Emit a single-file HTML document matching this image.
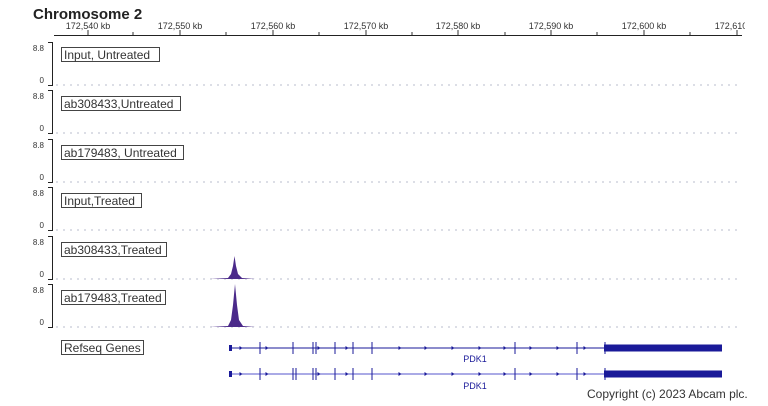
<!DOCTYPE html>
<html><head><meta charset="utf-8"><style>
body{margin:0;background:#fff;width:768px;height:401px;overflow:hidden;font-family:"Liberation Sans",sans-serif}
</style></head><body>
<svg width="768" height="401" xmlns="http://www.w3.org/2000/svg" font-family="Liberation Sans, sans-serif">
<defs>
<clipPath id="ax"><rect x="0" y="0" width="745" height="40"/></clipPath>
<g id="trk">
<path d="M48 0.5H52.5V43.5H48" fill="none" stroke="#222"/>
<text x="44" y="9" font-size="8" fill="#333" text-anchor="end">8.8</text>
<text x="44" y="41" font-size="8" fill="#333" text-anchor="end">0</text>
<line x1="56" y1="43" x2="742" y2="43" stroke="#b8bccc" stroke-width="1" stroke-dasharray="2 5"/>
</g>
<path id="arr" d="M-1.5 -2L1.5 0L-1.5 2Z"/>
</defs>
<text x="33" y="19" font-size="15" font-weight="bold" fill="#222">Chromosome 2</text>
<line x1="54" y1="35.5" x2="742" y2="35.5" stroke="#222" stroke-width="1"/>
<g font-size="9" fill="#333" text-anchor="middle" clip-path="url(#ax)">
<text x="88" y="29">172,540 kb</text><text x="180" y="29">172,550 kb</text><text x="273" y="29">172,560 kb</text><text x="366" y="29">172,570 kb</text><text x="458" y="29">172,580 kb</text><text x="551" y="29">172,590 kb</text><text x="644" y="29">172,600 kb</text><text x="737" y="29">172,610 kb</text>
</g>
<g stroke="#333">
<line x1="88" y1="30" x2="88" y2="35"/><line x1="133" y1="32" x2="133" y2="35"/><line x1="180" y1="30" x2="180" y2="35"/><line x1="226" y1="32" x2="226" y2="35"/><line x1="273" y1="30" x2="273" y2="35"/><line x1="319" y1="32" x2="319" y2="35"/><line x1="366" y1="30" x2="366" y2="35"/><line x1="412" y1="32" x2="412" y2="35"/><line x1="458" y1="30" x2="458" y2="35"/><line x1="505" y1="32" x2="505" y2="35"/><line x1="551" y1="30" x2="551" y2="35"/><line x1="597" y1="32" x2="597" y2="35"/><line x1="644" y1="30" x2="644" y2="35"/><line x1="690" y1="32" x2="690" y2="35"/><line x1="737" y1="30" x2="737" y2="35"/>
</g>
<g font-size="12" fill="#333">
<use href="#trk" y="42"/><rect x="61.5" y="47.5" width="98" height="14" fill="none" stroke="#444"/><text x="64" y="59">Input, Untreated</text>
<use href="#trk" y="90"/><rect x="61.5" y="96.5" width="119" height="14" fill="none" stroke="#444"/><text x="64" y="108">ab308433,Untreated</text>
<use href="#trk" y="139"/><rect x="61.5" y="145.5" width="122" height="14" fill="none" stroke="#444"/><text x="64" y="157">ab179483, Untreated</text>
<use href="#trk" y="187"/><rect x="61.5" y="193.5" width="80" height="14" fill="none" stroke="#444"/><text x="64" y="205">Input,Treated</text>
<use href="#trk" y="236"/><rect x="61.5" y="242.5" width="105" height="14" fill="none" stroke="#444"/><text x="64" y="254">ab308433,Treated</text>
<use href="#trk" y="284"/><rect x="61.5" y="290.5" width="104" height="14" fill="none" stroke="#444"/><text x="64" y="302">ab179483,Treated</text>
<rect x="61.5" y="340.5" width="82" height="14" fill="none" stroke="#444"/><text x="64" y="352">Refseq Genes</text>
</g>
<path d="M210 279L228 278L231 274L233 266L234.5 256L236 266L238 274L242 278L255 279Z" fill="#4b2a8a"/>
<path d="M210 327L228 326L231 320L233 305L235 284L237 305L239 320L243 326L255 327Z" fill="#4b2a8a"/>
<g fill="#1a1a99" stroke="#1a1a99">
<line x1="229" y1="348" x2="605" y2="348"/>
<rect x="229" y="345" width="3" height="6" stroke="none"/>
<rect x="604" y="344.5" width="118" height="7" stroke="none"/>
<path d="M260 342V354M293 342V354M313 342V354M316 342V354M335 342V354M353 342V354M372 342V354M515 342V354M577 342V354M605 342V354"/>
<line x1="229" y1="374" x2="605" y2="374" stroke="#5555cc"/>
<rect x="229" y="371" width="3" height="6" stroke="none"/>
<rect x="604" y="370.5" width="118" height="7" stroke="none"/>
<path d="M260 368V380M293 368V380M296 368V380M313 368V380M316 368V380M335 368V380M353 368V380M372 368V380M515 368V380M577 368V380M605 368V380"/>
</g>
<g fill="#1a1a99">
<use href="#arr" x="241" y="348"/><use href="#arr" x="267" y="348"/><use href="#arr" x="319" y="348"/><use href="#arr" x="347" y="348"/><use href="#arr" x="400" y="348"/><use href="#arr" x="426" y="348"/><use href="#arr" x="453" y="348"/><use href="#arr" x="480" y="348"/><use href="#arr" x="505" y="348"/><use href="#arr" x="531" y="348"/><use href="#arr" x="558" y="348"/><use href="#arr" x="585" y="348"/>
<use href="#arr" x="241" y="374"/><use href="#arr" x="267" y="374"/><use href="#arr" x="319" y="374"/><use href="#arr" x="347" y="374"/><use href="#arr" x="400" y="374"/><use href="#arr" x="426" y="374"/><use href="#arr" x="453" y="374"/><use href="#arr" x="480" y="374"/><use href="#arr" x="505" y="374"/><use href="#arr" x="531" y="374"/><use href="#arr" x="558" y="374"/><use href="#arr" x="585" y="374"/>
</g>
<g font-size="9" fill="#1a1a99" text-anchor="middle"><text x="475" y="362">PDK1</text><text x="475" y="389">PDK1</text></g>
<text x="587" y="398" font-size="12" fill="#333">Copyright (c) 2023 Abcam plc.</text>
</svg>
</body></html>
